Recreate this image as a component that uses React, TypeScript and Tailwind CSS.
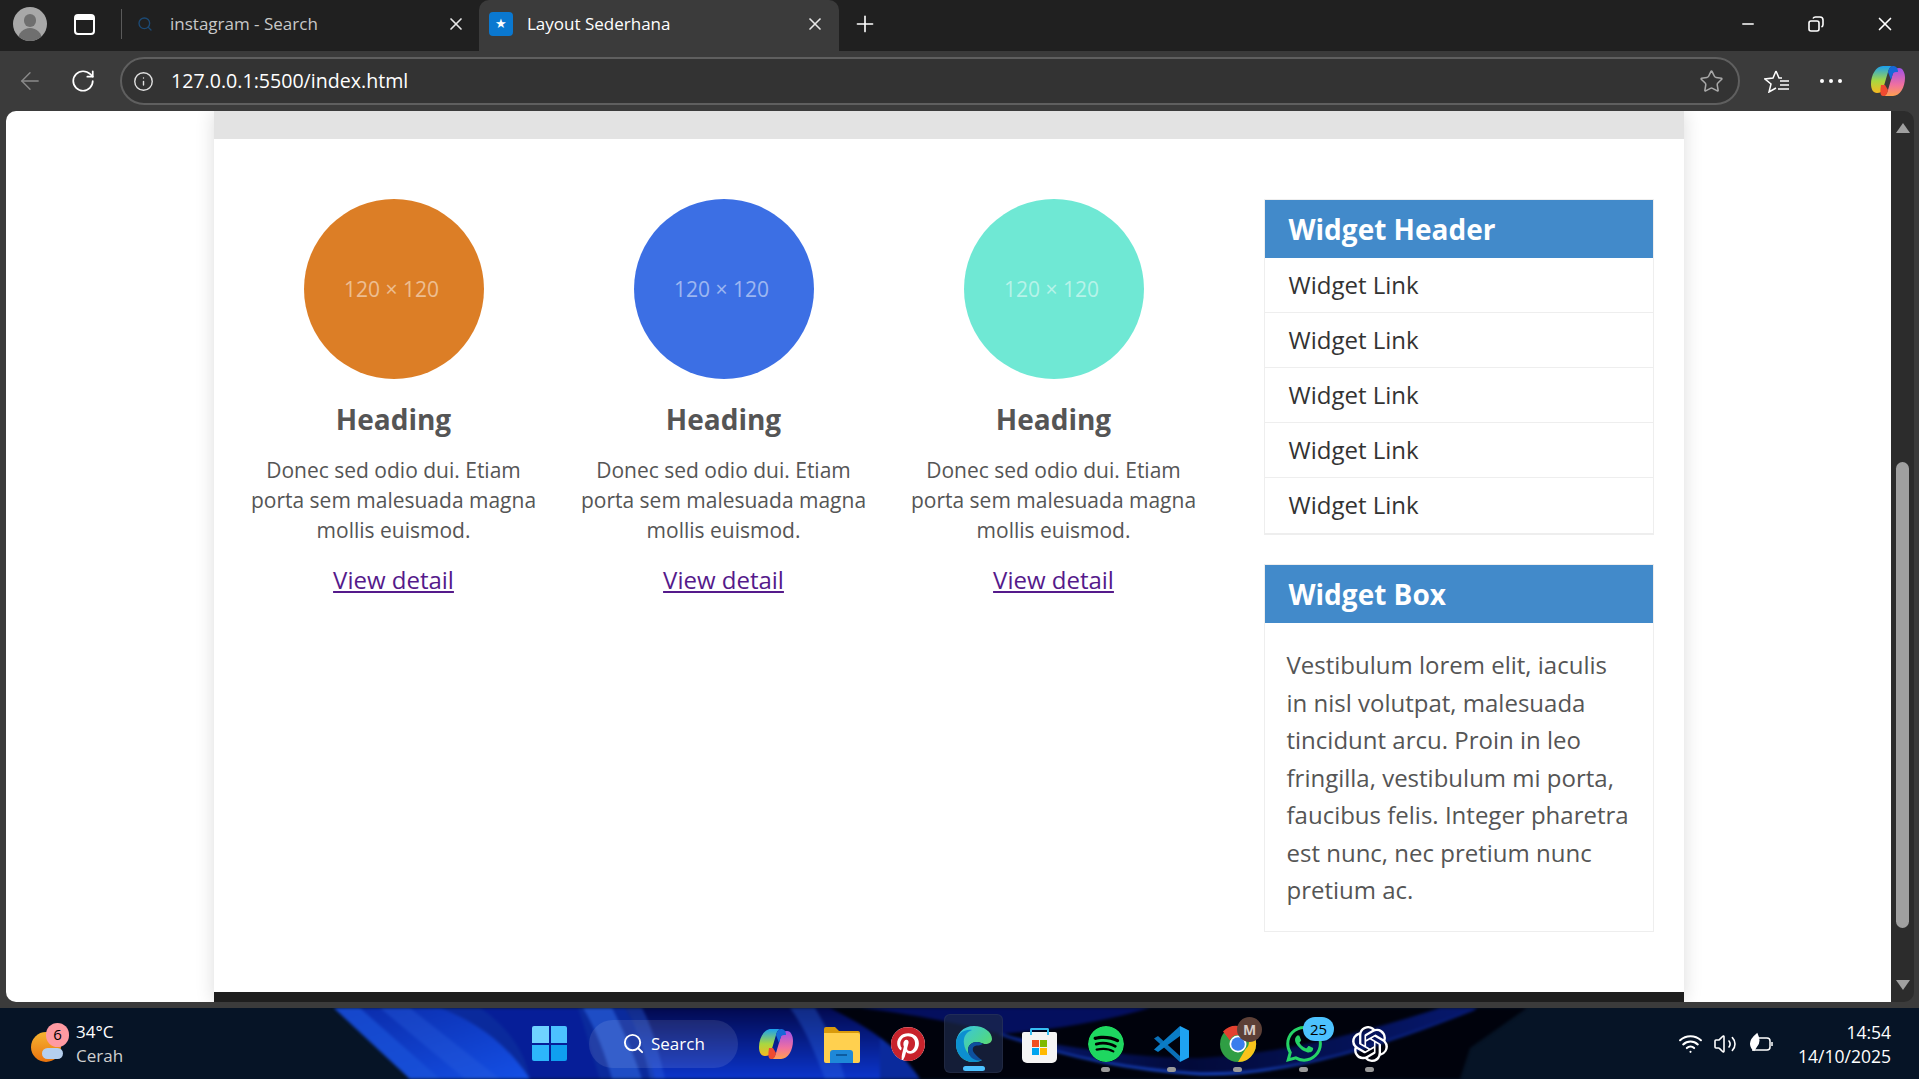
import { SiOpenai, SiPinterest, SiSpotify, SiWhatsapp } from "react-icons/si";
import { ArrowLeft, Info, Minus, Plus, RotateCw, Search, Star, Volume2, Wifi, X } from "lucide-react";

const circles = ["bg-[#dc7e26]", "bg-[#3c6fe4]", "bg-[#6fe8d4]"];
const links = [1, 2, 3, 4, 5];

function Copilot({ size }: { size: number }) {
  return (
    <svg width={size} height={size} viewBox="0 0 36 36">
      <defs>
        <linearGradient id={`cpa${size}`} x1="0" y1="0" x2="0" y2="1">
          <stop offset="0" stopColor="#1aa0f0" />
          <stop offset="0.55" stopColor="#a8d840" />
          <stop offset="1" stopColor="#f8b820" />
        </linearGradient>
        <linearGradient id={`cpb${size}`} x1="0" y1="0" x2="0" y2="1">
          <stop offset="0" stopColor="#a050e8" />
          <stop offset="0.6" stopColor="#f070a0" />
          <stop offset="1" stopColor="#ffa050" />
        </linearGradient>
      </defs>
      <path d="M13 3h10c-3 0-4 3-5 6l-5 17c-1 3-3 4-6 4-4 0-6-4-6-9C1 12 6 3 13 3z" fill={`url(#cpa${size})`} />
      <path d="M23 33H13c3 0 4-3 5-6l5-17c1-3 3-5 6-5 4 0 6 5 6 10 0 9-5 18-12 18z" fill={`url(#cpb${size})`} />
      <path d="M13 3h10c3 0 5 2 5 6h-2c-2 0-3 1-3.500 3L21 17 18 9c1-3 2-6 5-6H13z" fill="#1668d8" />
      <path d="M11 22h4l3 5c-1 4-2 6-5 6-3 0-3-4-2-11z" fill="#f04a30" />
    </svg>
  );
}

function Edge() {
  return (
    <svg width="38" height="38" viewBox="0 0 38 38">
      <defs>
        <linearGradient id="edgea" x1="0" y1="0" x2="1" y2="1">
          <stop offset="0" stopColor="#35c1f1" />
          <stop offset="0.6" stopColor="#4fd68a" />
          <stop offset="1" stopColor="#8fe04a" />
        </linearGradient>
      </defs>
      <path d="M19 1C8 1 1 9 1 19c0 11 8 18 17 18 4 0 7-1 9-2-8 1-14-4-14-10 0-5 4-8 9-8 3 0 7 2 8 2 4 0 7-2 7-5C37 7 29 1 19 1z" fill="url(#edgea)" />
      <path d="M1 19C1 9 9 4 17 5 11 7 8 12 9 19c1 8 8 16 18 16-3 2-6 2-9 2C8 37 1 29 1 19z" fill="#0c8fd0" />
      <path d="M13 25c0-5 4-8 9-8 3 0 4 1 6 2-3 2-6 1-8 2-3 1-3 5 0 8 2 2 5 5 7 6-8 2-14-4-14-10z" fill="#0d4f9e" />
    </svg>
  );
}

function Chrome() {
  return (
    <svg width="38" height="40" viewBox="0 0 38 38">
      <circle cx="19" cy="19" r="18" fill="#2f9e44" />
      <path d="M19 1a18 18 0 0 1 15.600 9H19a9 9 0 0 0-8.200 5.200L4 6.500A18 18 0 0 1 19 1z" fill="#e3412f" />
      <path d="M34.600 10A18 18 0 0 1 19 37l7.600-13a9 9 0 0 0 0-14z" fill="#f9c31a" />
      <circle cx="19" cy="19" r="8.500" fill="#fff" />
      <circle cx="19" cy="19" r="6.800" fill="#3b7ded" />
    </svg>
  );
}

function Vscode() {
  return (
    <svg width="38" height="38" viewBox="0 0 38 38">
      <path d="M1 13.500L5 11l22 20v6z" fill="#0a70b8" />
      <path d="M27 1v10L5 27l-4-2.500z" fill="#0a7cc6" />
      <path d="M27 1l9 4.500v27L27 37z" fill="#1ea3f2" />
    </svg>
  );
}

function Store() {
  return (
    <div className="relative mt-[7px] flex h-[31px] w-[35px] items-center justify-center rounded-b-[5px] rounded-t-[2px] bg-[#f4f4f4]">
      <div className="absolute -top-[4px] h-[7px] w-[19px] rounded-t-[2px] border-2 border-b-0 border-[#36bdf2]" />
      <div className="grid grid-cols-2 gap-[1px]">
        <div className="h-[7px] w-[7px] bg-[#f25022]" />
        <div className="h-[7px] w-[7px] bg-[#7fba00]" />
        <div className="h-[7px] w-[7px] bg-[#00a4ef]" />
        <div className="h-[7px] w-[7px] bg-[#ffb900]" />
      </div>
    </div>
  );
}

function Folder() {
  return (
    <svg width="37" height="38" viewBox="0 0 37 38">
      <path d="M1 4a2 2 0 0 1 2-2h9l4 4h19a2 2 0 0 1 2 2v4H1z" fill="#d99a0b" />
      <path d="M1 8h34a2 2 0 0 1 2 2v26a2 2 0 0 1-2 2H3a2 2 0 0 1-2-2z" fill="#ffd04f" />
      <path d="M7 38V28a3 3 0 0 1 3-3h17a3 3 0 0 1 3 3v10z" fill="#1e88d8" />
      <rect x="13" y="29" width="11" height="2" fill="#0d5ca0" />
    </svg>
  );
}

function Wallpaper() {
  return (
    <svg className="absolute inset-0 blur-[1.5px]" width="1919" height="71" viewBox="0 0 1919 71">
      <defs>
        <linearGradient id="wallTop" x1="0" y1="0" x2="0" y2="1">
          <stop offset="0" stopColor="#02094f" />
          <stop offset="1" stopColor="#0b35cc" />
        </linearGradient>
        <linearGradient id="wallLobe" x1="0" y1="0" x2="1" y2="1">
          <stop offset="0" stopColor="#0a2aa8" />
          <stop offset="1" stopColor="#1450e6" />
        </linearGradient>
        <linearGradient id="swoosh" x1="0" y1="0" x2="1" y2="0">
          <stop offset="0" stopColor="#06186e" />
          <stop offset="0.4" stopColor="#020a3a" />
          <stop offset="1" stopColor="#06186e" />
        </linearGradient>
        <linearGradient id="swooshLine" x1="0" y1="0" x2="1" y2="0">
          <stop offset="0" stopColor="#0d2a90" />
          <stop offset="0.45" stopColor="#1a50e0" />
          <stop offset="0.7" stopColor="#0d2a90" />
          <stop offset="1" stopColor="#06186e" />
        </linearGradient>
      </defs>
      <path d="M334 0L410 71H930V0z" fill="#0a2a9c" />
      <path d="M334 0L410 71H530C510 40 480 15 440 0z" fill="url(#wallLobe)" />
      <path d="M334 0L410 71H440L360 0z" fill="#1a52d8" opacity="0.7" />
      <path d="M380 0L465 71H500L410 0z" fill="#2a62e0" opacity="0.35" />
      <path d="M480 0C510 20 525 45 530 71H600C590 40 585 20 578 0z" fill="#061e98" />
      <path d="M625 0C640 25 650 50 655 71H880V0z" fill="url(#wallTop)" />
      <path d="M583 0H612C625 25 635 50 642 71H612C605 45 595 20 583 0z" fill="#2f6ae8" opacity="0.55" />
      <path d="M625 0H642C655 25 660 50 665 71H650C645 45 638 20 625 0z" fill="#2a5ee0" opacity="0.4" />
      <path d="M790 0H815C830 25 840 50 845 71H825C815 45 805 20 790 0z" fill="#2f6ae8" opacity="0.35" />
      <path d="M830 0H1480L1400 71H920C900 40 870 20 830 0z" fill="#00020c" />
      <path d="M860 0H1150C1110 12 1055 22 1000 26 960 15 910 6 860 0z" fill="#040f5e" />
      <path d="M1000 26C1070 50 1130 62 1200 66 1290 68 1390 35 1477 0H1440C1360 25 1290 45 1200 50 1130 50 1060 38 1000 26z" fill="url(#swoosh)" />
      <path d="M1000 26C1070 50 1130 62 1200 66 1290 68 1390 35 1477 0" stroke="url(#swooshLine)" strokeWidth="2.5" fill="none" />
      <path d="M1477 0H1527L1470 40 1460 71H1400z" fill="#00020c" />
    </svg>
  );
}

function TaskIcon({ children, running, active }: { children: React.ReactNode; running?: boolean; active?: boolean }) {
  return (
    <div className={`relative flex h-[59px] w-[59px] items-center justify-center rounded-md ${active ? "border border-white/5 bg-[#1d2a4a]/70" : ""}`}>
      {children}
      {running && <div className="absolute bottom-[1px] h-[5px] w-[9px] rounded-full bg-[#9a9a9a]" />}
      {active && <div className="absolute bottom-[1px] h-[5px] w-[22px] rounded-full bg-[#4cc2ff]" />}
    </div>
  );
}

function Column({ color }: { color: string }) {
  return (
    <div className="flex w-[330px] flex-col items-center px-[15px] text-center">
      <div className={`flex h-[180px] w-[180px] items-center justify-center rounded-full pt-[2px] text-[21px] text-white/50 ${color}`}>
        <span className="pr-[4px]">120 × 120</span>
      </div>
      <h3 className="mt-[20px] text-[28px] leading-[40px] font-bold text-[#555]">Heading</h3>
      <p className="mt-[16px] text-[21px] leading-[30px] text-[#555]">Donec sed odio dui. Etiam porta sem malesuada magna mollis euismod.</p>
      <a href="#" className="mt-[17px] text-[24px] leading-[36px] text-[#551a8b] underline">View detail</a>
    </div>
  );
}

export default function App() {
  return (
    <div className="flex h-screen w-full flex-col overflow-hidden bg-[#3b3b3b] font-['Open_Sans',sans-serif]">
      {/* tab strip */}
      <div className="flex h-[51px] shrink-0 items-center bg-[#202020] text-white">
        <div className="mb-[3px] ml-[13px] flex h-[34px] w-[34px] items-end justify-center overflow-hidden rounded-full bg-[#a8a8a8]">
          <div className="relative h-full w-full">
            <div className="absolute top-[7px] left-[11px] h-[13px] w-[12px] rounded-full bg-[#6f6f6f]" />
            <div className="absolute top-[21px] left-[5px] h-[16px] w-[24px] rounded-t-full bg-[#6f6f6f]" />
          </div>
        </div>
        <div className="mb-[3px] ml-[27px] h-[21px] w-[21px] rounded-[4px] border-2 border-white">
          <div className="h-[4px] w-full bg-white" />
        </div>
        <div className="mb-[3px] ml-[26px] h-[30px] w-px bg-[#5a5a5a]" />
        <div className="flex h-full w-[357px] items-center pb-[3px]">
          <Search size={16} className="ml-[15px] text-[#1c4a75]" />
          <span className="ml-[17px] text-[17px] text-[#c8c8c8]">instagram - Search</span>
          <X size={20} className="mr-[13px] ml-auto text-[#e8e8e8]" />
        </div>
        <div className="flex h-full w-[360px] items-center rounded-t-[10px] bg-[#3b3b3b] pb-[3px]">
          <div className="ml-[10px] flex h-[24px] w-[24px] items-center justify-center rounded-[4px] bg-[#0a78d0] text-[13px]">★</div>
          <span className="ml-[14px] text-[17px] text-white">Layout Sederhana</span>
          <X size={20} className="mr-[14px] ml-auto text-[#e8e8e8]" />
        </div>
        <Plus size={26} strokeWidth={1.5} className="mb-[3px] ml-[13px]" />
        <div className="mb-[3px] ml-auto flex items-center">
          <Minus size={18} strokeWidth={1.8} className="mr-[51px]" />
          <svg width="16" height="16" viewBox="0 0 16 16" fill="none" stroke="#fff" strokeWidth="1.6" className="mr-[50px]">
            <rect x="1" y="5" width="10" height="10" rx="2" />
            <path d="M5 2.500c.5-1 1-1.500 2.500-1.500H12c1.700 0 3 1.300 3 3v4.500c0 1.500-.5 2-1.500 2.500" />
          </svg>
          <X size={22} strokeWidth={1.8} className="mr-[23px]" />
        </div>
      </div>

      {/* toolbar */}
      <div className="flex h-[60px] shrink-0 items-center bg-[#3b3b3b] text-white">
        <ArrowLeft size={28} strokeWidth={1.2} className="ml-[16px] text-[#8a8a8a]" />
        <RotateCw size={26} strokeWidth={1.6} className="ml-[26px]" />
        <div className="ml-[24px] flex h-[48px] w-[1620px] items-center rounded-full border-2 border-[#5f5f5f] bg-[#333333]">
          <Info size={21} strokeWidth={1.6} className="ml-[11px] text-[#e0e0e0]" />
          <span className="ml-[17px] text-[19.6px] font-medium text-white">127.0.0.1:5500/index.html</span>
          <Star size={25} strokeWidth={1.5} className="mr-[14px] ml-auto text-[#a8a8a8]" />
        </div>
        <div className="ml-[24px] flex items-center">
          <svg width="26" height="24" viewBox="0 0 26 24" fill="none" stroke="#fff" strokeWidth="1.5">
            <path d="M12 2l3 7h3M12 2L9 9l-8 1 6 5-2 8 7-4M16 12h9M16 16h9M14 20h11" />
          </svg>
          <div className="ml-[30px] flex gap-[5px]">
            <div className="h-[4px] w-[4px] rounded-full bg-white" />
            <div className="h-[4px] w-[4px] rounded-full bg-white" />
            <div className="h-[4px] w-[4px] rounded-full bg-white" />
          </div>
          <div className="ml-[28px]"><Copilot size={36} /></div>
        </div>
      </div>

      {/* browser viewport */}
      <div className="flex min-h-0 flex-1 pr-[5px] pb-[6px] pl-[6px]">
        <div className="flex min-w-0 flex-1 justify-center overflow-hidden rounded-l-[10px] bg-white">
          <div className="flex w-[1470px] flex-col bg-white shadow-[0_0_18px_rgba(0,0,0,0.14)]">
            <div className="h-[28px] shrink-0 bg-[#e3e3e3]" />
            <div className="flex flex-1 justify-between pt-[60px] pr-[30px] pl-[15px]">
              <div className="flex">
                {circles.map((c) => (
                  <Column key={c} color={c} />
                ))}
              </div>
              <aside className="w-[390px]">
                <div className="border border-b-2 border-[#eeeeee]">
                  <h4 className="h-[58px] bg-[#428aca] pl-[24px] text-[28px] leading-[58px] font-bold text-white">Widget Header</h4>
                  {links.map((n) => (
                    <div key={n} className="h-[55px] border-b border-[#eeeeee] pl-[24px] text-[24px] leading-[54px] text-[#333] last:border-b-0">Widget Link</div>
                  ))}
                </div>
                <div className="mt-[29px] border border-[#eeeeee]">
                  <h4 className="h-[58px] bg-[#428aca] pl-[24px] text-[28px] leading-[58px] font-bold text-white">Widget Box</h4>
                  <p className="px-[22px] pt-[23px] pb-[22px] text-[24px] leading-[37.5px] text-[#555]">Vestibulum lorem elit, iaculis in nisl volutpat, malesuada tincidunt arcu. Proin in leo fringilla, vestibulum mi porta, faucibus felis. Integer pharetra est nunc, nec pretium nunc pretium ac.</p>
                </div>
              </aside>
            </div>
            <div className="h-[10px] shrink-0 bg-[#1e1e1e]" />
          </div>
        </div>
        <div className="flex w-[23px] shrink-0 flex-col items-center rounded-r-[10px] bg-[#2c2c2c] py-[12px]">
          <div className="h-0 w-0 border-x-[7px] border-b-[10px] border-x-transparent border-b-[#a0a0a0]" />
          <div className="mt-[329px] h-[466px] w-[13px] rounded-full bg-[#a0a0a0]" />
          <div className="mt-auto h-0 w-0 border-x-[7px] border-t-[10px] border-x-transparent border-t-[#a0a0a0]" />
        </div>
      </div>

      {/* windows taskbar */}
      <div className="relative flex h-[71px] shrink-0 items-center overflow-hidden bg-[#061426] text-white">
        <Wallpaper />

        <div className="relative ml-[31px] h-[40px] w-[36px]">
          <div className="absolute top-[8px] left-0 h-[30px] w-[30px] rounded-full bg-gradient-to-b from-[#f5b330] to-[#e8720c]" />
          <div className="absolute top-[24px] left-[11px] h-[11px] w-[21px] rounded-full bg-[#b5cfee]" />
          <div className="absolute -top-[1px] left-[15px] flex h-[24px] w-[23px] items-center justify-center rounded-full bg-[#ff9aa2] text-[15px] text-black">6</div>
        </div>
        <div className="relative ml-[9px] flex flex-col text-[17px] leading-[24px]">
          <span>34°C</span>
          <span className="text-[#cfcfcf]">Cerah</span>
        </div>

        <div className="absolute left-[532px] grid h-[35px] w-[35px] grid-cols-2 gap-[2px]">
          <div className="rounded-tl-[2px] bg-[#6fd2ff]" />
          <div className="rounded-tr-[2px] bg-[#4cc2ff]" />
          <div className="rounded-bl-[2px] bg-[#2db6fb]" />
          <div className="rounded-br-[2px] bg-[#0f9ff0]" />
        </div>
        <div className="absolute left-[589px] flex h-[48px] w-[149px] items-center rounded-full bg-white/10">
          <Search size={23} strokeWidth={2} className="ml-[33px]" />
          <span className="ml-[6px] text-[17px]">Search</span>
        </div>

        <div className="absolute left-[746px] flex items-center">
          <TaskIcon><Copilot size={36} /></TaskIcon>
          <div className="ml-[7px]"><TaskIcon><Folder /></TaskIcon></div>
          <div className="ml-[7px]"><TaskIcon><div className="rounded-full bg-white"><SiPinterest size={34} className="text-[#c8232c]" /></div></TaskIcon></div>
          <div className="ml-[7px]"><TaskIcon active><Edge /></TaskIcon></div>
          <div className="ml-[7px]"><TaskIcon><Store /></TaskIcon></div>
          <div className="ml-[7px]"><TaskIcon running><SiSpotify size={36} className="rounded-full bg-black text-[#1ed760]" /></TaskIcon></div>
          <div className="ml-[7px]"><TaskIcon running><Vscode /></TaskIcon></div>
          <div className="ml-[7px]">
            <TaskIcon running>
              <Chrome />
              <div className="absolute top-[3px] right-[5px] flex h-[25px] w-[25px] items-center justify-center rounded-full bg-[#5d4037] text-[14px] font-bold text-[#d8ccc8]">M</div>
            </TaskIcon>
          </div>
          <div className="ml-[7px]">
            <TaskIcon running>
              <SiWhatsapp size={36} className="text-[#25d366]" />
              <div className="absolute top-[3px] right-[-1px] flex h-[24px] w-[31px] items-center justify-center rounded-full bg-[#4cc2ff] text-[15px] text-black">25</div>
            </TaskIcon>
          </div>
          <div className="ml-[7px]"><TaskIcon running><SiOpenai size={36} className="text-white" /></TaskIcon></div>
        </div>

        <div className="relative ml-auto flex items-center">
          <Wifi size={25} strokeWidth={2} />
          <Volume2 size={24} strokeWidth={1.6} className="ml-[10px]" />
          <svg width="26" height="24" viewBox="0 0 26 24" fill="none" stroke="#fff" strokeWidth="1.5" className="ml-[12px]">
            <path d="M7 6h11a3 3 0 0 1 3 3v6a3 3 0 0 1-3 3H3M23 10v4" />
            <path d="M3 16c-3-5 0-10 5-14 2 4 3 9-1 13l-2 3z" fill="#fff" />
          </svg>
          <div className="mr-[28px] ml-[23px] flex flex-col items-end text-[17.5px] leading-[24px]">
            <span>14:54</span>
            <span>14/10/2025</span>
          </div>
        </div>
      </div>
    </div>
  );
}
